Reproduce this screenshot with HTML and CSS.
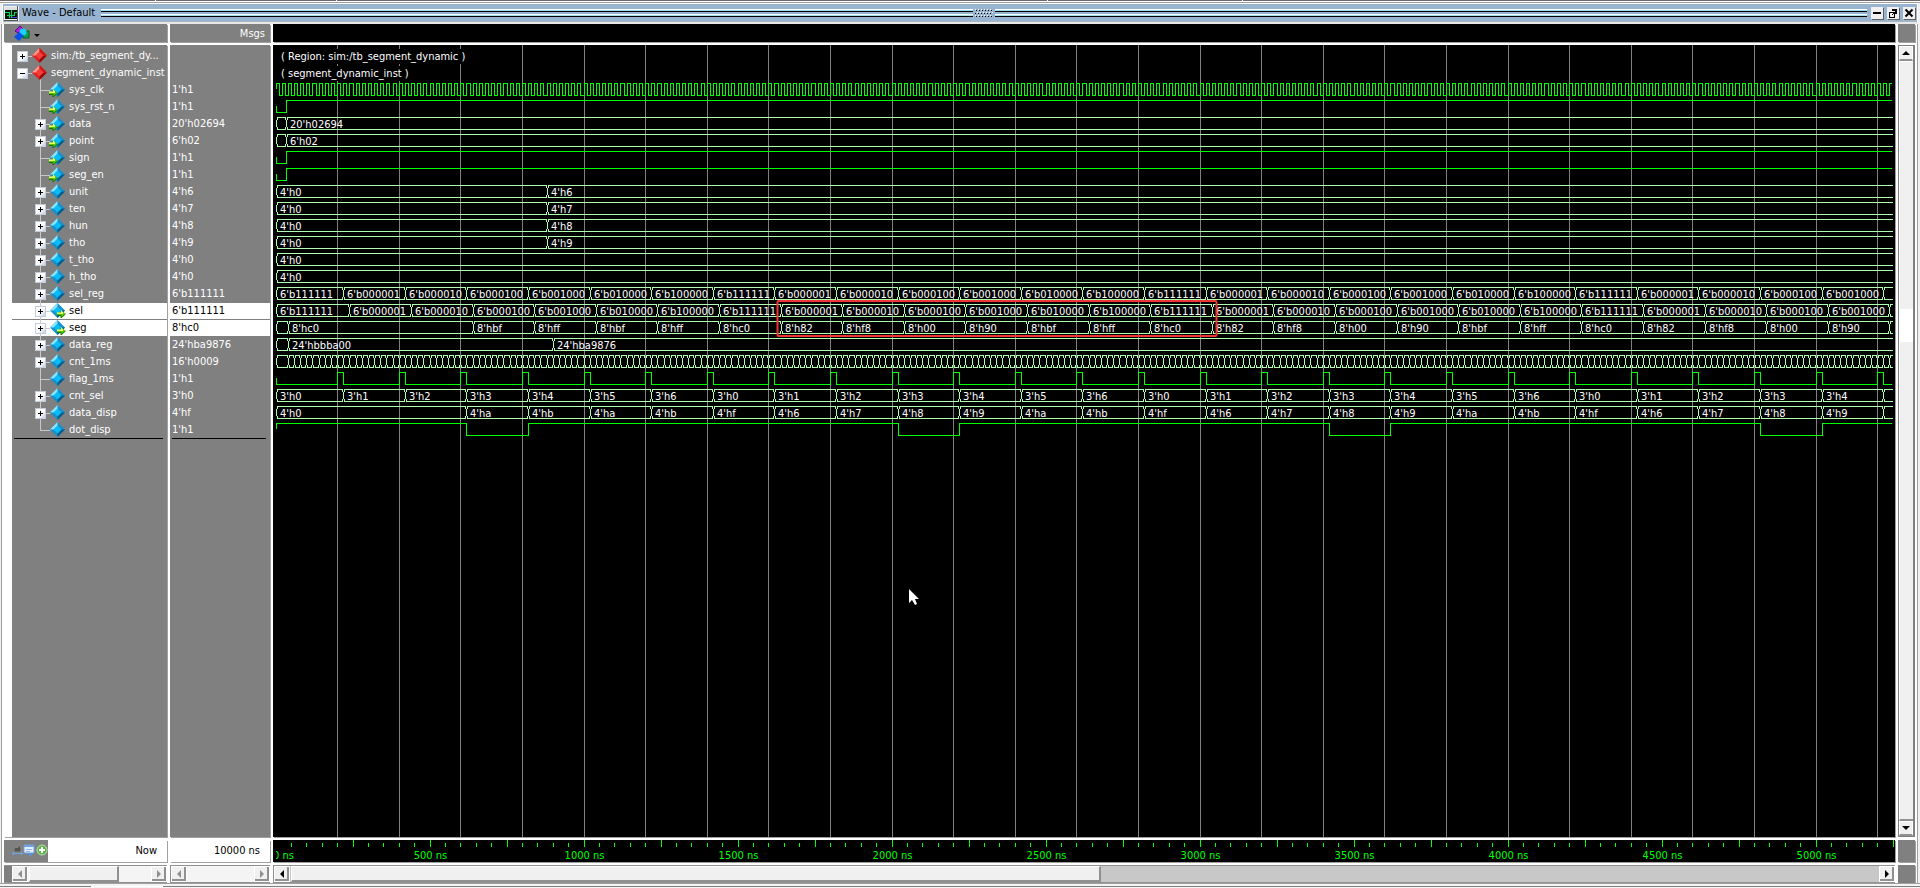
FILE: index.html
```html
<!DOCTYPE html>
<html lang="en">
<head>
<meta charset="utf-8">
<title>Wave - Default</title>
<link rel="stylesheet" href="styles.css">
</head>
<body>
<svg class="defs" width="0" height="0" aria-hidden="true">
  <defs>
    <symbol id="i-region" viewBox="0 0 15 15">
      <path d="M7.500 0 15 7.500 7.500 15 0 7.500Z" fill="#e02020"/>
      <path d="M7.500 0 0 7.500 4 7.500 7.500 4Z" fill="#ff9a90"/>
      <path d="M7.500 15 15 7.500 11 7.500 7.500 11Z" fill="#900c0c"/>
      <path d="M7.500 0 15 7.500 11 7.500 7.500 4Z" fill="#d01818"/>
      <path d="M7.500 3.500 11.500 7.500 7.500 11.500 3.500 7.500Z" fill="#f83c38"/>
    </symbol>
    <symbol id="i-signal" viewBox="0 0 15 15">
      <path d="M7.500 0 15 7.500 7.500 15 0 7.500Z" fill="#1590cc"/>
      <path d="M7.500 0 0 7.500 4 7.500 7.500 4Z" fill="#90e4fc"/>
      <path d="M7.500 15 15 7.500 11 7.500 7.500 11Z" fill="#075c88"/>
      <path d="M7.500 3.500 11.500 7.500 7.500 11.500 3.500 7.500Z" fill="#08bcf8"/>
    </symbol>
    <symbol id="i-arrow" viewBox="0 0 9 8">
      <path d="M0 2.500H4V0L8.500 4 4 8V5.500H0Z" fill="#50c800"/>
      <path d="M0 2.500H4V0L6 2.500V4H0Z" fill="#e8ff70"/>
      <path d="M0 5.500H4V8L8.500 4" fill="none" stroke="#187000" stroke-width="1"/>
    </symbol>
  </defs>
</svg>

<main class="window">
  <div class="edge edge-top"></div>
  <header class="titlebar">
    <svg class="app-icon" width="15" height="15" viewBox="0 0 15 15" shape-rendering="crispEdges" aria-hidden="true">
      <path d="M0 0H15V15H0Z" fill="#f0f0f0"/><path d="M14 0V15H0V14H13V0Z" fill="#555"/>
      <path d="M1 2H13V13H1Z" fill="#001808"/><path d="M1 1H13V4H1Z" fill="#e0e0e0"/>
      <path d="M1 6H5V12M7 4V12M3 9H10V6H13" fill="none" stroke="#10d060"/>
      <path d="M8 11.500H13" stroke="#4a40ff"/>
    </svg>
    <h1>Wave - Default</h1>
    <span class="groove"></span>
    <svg class="grip" width="18" height="9" viewBox="0 0 18 9" shape-rendering="crispEdges" aria-hidden="true">
      <path d="M0 .5H18M2 3.500H18M0 6.500H18" stroke="#fff" stroke-dasharray="1 2"/>
      <path d="M1 1.500H18M0 4.500H18M1 7.500H18" stroke="#000" stroke-dasharray="1 2"/>
    </svg>
    <span class="groove"></span>
    <div class="controls">
      <button type="button" aria-label="Minimize"><svg viewBox="0 0 12 12"><path d="M2 6H10" stroke-width="2"/></svg></button>
      <button type="button" aria-label="Undock"><svg viewBox="0 0 12 12" shape-rendering="crispEdges"><path d="M2.500 5.500H7.500V10.500H2.500Z"/><path d="M5 2H10V7H8V4H5Z" fill="#000" stroke="none"/><path d="M5 8 9 4" stroke-width="1"/></svg></button>
      <button type="button" aria-label="Close"><svg viewBox="0 0 12 12"><path d="M2.500 2.500 9.500 9.500M9.500 2.500 2.500 9.500" stroke-width="2"/></svg></button>
    </div>
  </header>

  <section class="panes">
    <div class="cell head-names">
      <button type="button" class="filter" aria-label="Signal filter">
        <svg width="28" height="18" viewBox="0 0 28 18" aria-hidden="true">
          <path d="M6 2 11 7 6 10 1 7Z" fill="#b020e0" stroke="#50087a"/>
          <path d="M9 7H15V14H9Z" fill="#10a048" stroke="#066028"/>
          <circle cx="9" cy="8" r="3.500" fill="#18d0f8"/>
          <path d="M5 8 10 12 5 17 0 13Z" fill="#0850e8"/>
          <path d="M20 10H26L23 13Z" fill="#000"/>
        </svg>
      </button>
    </div>
    <div class="cell head-msgs">Msgs</div>
    <div class="cell black"></div>
    <div class="cell"></div>

    <div class="cell names"><ul id="names"></ul><hr class="insert"></div>
    <div class="cell values"><ul id="values"></ul><hr></div>
    <div class="cell black" id="wave-pane"><svg id="wave" role="img" aria-label="Waveforms"></svg></div>
    <div class="vbar">
      <button type="button" aria-label="Scroll up"><i class="tri up"></i></button>
      <div class="vthumb"><span></span></div>
      <button type="button" aria-label="Scroll down"><i class="tri down"></i></button>
    </div>

    <div class="cell now">
      <div class="tools">
        <svg width="36" height="14" viewBox="0 0 36 14" aria-hidden="true">
          <path d="M2 8V5L4 2 5 4 7 1 9 4V8Z" fill="#555" stroke="#8a8a8a"/><path d="M0 9.500H11M2 8 0 9.500 2 11M9 8 11 9.500 9 11" fill="none" stroke="#6fa4e0"/>
          <rect x="12" y="1" width="10" height="8" rx="1" fill="#e4effc" stroke="#6fa4e0"/><path d="M12 2H22" stroke="#6fa4e0" stroke-width="2"/><path d="M14 5.500H20M14 7.500H18" stroke="#8db4e4"/><path d="M15 9H21L18 13Z" fill="#5a92d6"/>
          <circle cx="30" cy="6" r="5" fill="#5cb848" stroke="#b8e4ac"/><path d="M30 3V9M27 6H33" stroke="#fff" stroke-width="2"/>
        </svg>
      </div>
      <span>Now</span>
    </div>
    <div class="cell now-value">10000 ns</div>
    <div class="cell black" id="ruler-pane"><svg id="ruler" role="img" aria-label="Time ruler"></svg></div>
    <div class="cell"></div>

    <div class="hbar off inset">
      <button type="button" aria-label="Scroll names left"><i class="tri left"></i></button>
      <div class="track"><span class="thumb names-thumb"></span></div>
      <button type="button" aria-label="Scroll names right"><i class="tri right"></i></button>
    </div>
    <div class="hbar off">
      <button type="button" aria-label="Scroll values left"><i class="tri left"></i></button>
      <div class="track"></div>
      <button type="button" aria-label="Scroll values right"><i class="tri right"></i></button>
    </div>
    <div class="hbar">
      <button type="button" aria-label="Scroll waves left"><i class="tri left"></i></button>
      <div class="track"><span class="thumb wave-thumb"></span></div>
      <button type="button" aria-label="Scroll waves right"><i class="tri right"></i></button>
    </div>
    <div class="cell"></div>
  </section>
  <div class="edge edge-bottom"></div>
</main>
<script src="wave.js"></script>
</body>
</html>
```
FILE: styles.css
```css
* { box-sizing: border-box; }

body {
  margin: 0;
  background: #f0f0f0;
  font: 11px/14px "DejaVu Sans Condensed", "Noto Sans", sans-serif;
  color: #000;
}

ul, h1, hr { margin: 0; padding: 0; border: 0; list-style: none; font: inherit; }
button { padding: 0; border: 0; font: inherit; background: #f0f0f0; }
.defs { position: absolute; }

.window { display: flex; flex-direction: column; height: 100vh; overflow: hidden; }

.edge { flex: none; }
.edge-top {
  height: 3px;
  border-bottom: 1px solid #a0a0a0;
  background:
    linear-gradient(90deg, #706a6e 155px, #fff 155px 156px, #706a6e 156px 336px, #fff 336px 337px, #706a6e 337px 1047px, #fff 1047px 1048px, #706a6e 1048px 1242px, #fff 1242px 1243px, #706a6e 1243px) 0 0 / 100% 1px no-repeat #fff;
}
.edge-bottom {
  height: 5px;
  border-top: 1px solid #a0a0a0;
  background: linear-gradient(90deg, #808080 91px, #fff 91px 163px, #808080 163px) 0 2px / 100% 1px no-repeat #f4f4f4;
}

.titlebar {
  flex: none;
  display: flex;
  align-items: center;
  height: 21px;
  margin: 0 2px;
  padding: 0 2px 0 1px;
  background: #99b4d1;
  border: solid #fff;
  border-width: 1px 1px 2px;
  border-bottom-color: #e8e8e8;
  box-shadow: inset 0 -1px #a8b4c0;
}
.app-icon { flex: none; }
.titlebar h1 { margin: 0 6px 0 3px; white-space: nowrap; }
.groove {
  flex: 1;
  height: 8px;
  background: linear-gradient(#fff 1px, #9fe0ee 1px 2px, #000 2px 3px, transparent 3px 5px, #fff 5px 6px, #9fe0ee 6px 7px, #000 7px);
}
.grip { flex: none; margin: 0 2px; }
.controls { display: flex; gap: 4px; margin-left: 4px; }
.controls button { width: 12px; height: 12px; box-shadow: 1px 1px #606060; }
.controls svg { display: block; fill: none; stroke: #000; }

.panes {
  flex: 1;
  min-height: 0;
  display: grid;
  grid-template-columns: 163px 100px minmax(0, 1fr) 17px;
  grid-template-rows: 18px minmax(0, 1fr) 22px 18px;
  gap: 3px;
  margin: 0 2px 0 1px;
  padding: 0 2px;
  background: #fff;
  border-right: 1px solid #a0a0a0;
  border-left: 1px solid #a0a0a0;
}
.cell { background: #808080; box-shadow: 1px 1px #a0a0a0; overflow: hidden; }
.black { background: #000; }
.black svg { display: block; width: 100%; height: 100%; }

.head-names { padding-left: 10px; }
.filter { display: block; background: none; }
.filter svg { display: block; }
.head-msgs { padding: 3px 5px 0 0; text-align: right; color: #fff; }

.names { border-left: 8px solid #fff; padding-top: 3px; color: #fff; }
.values { padding-top: 3px; color: #fff; }
.row { display: flex; height: 17px; align-items: center; white-space: nowrap; padding-bottom: 2px; }
.row.selected { background: #fff; color: #000; border-bottom: 1px solid #808080; padding-bottom: 1px; }
.values .row { padding-left: 2px; }
.lead { flex: none; position: relative; width: 18px; height: 17px; }
.name-row { padding: 0 0 0 2px; align-items: stretch; }
.name-row.selected { padding-bottom: 0; }
.name-row.child { padding-left: 20px; }
.name-row .label { line-height: 15px; padding-left: 4px; }
.name-row .icon { flex: none; position: relative; width: 15px; height: 15px; z-index: 1; }
.icon svg { display: block; width: 15px; height: 15px; }
.icon .dir { position: absolute; width: 9px; height: 8px; top: 7px; left: -1px; }
.icon .dir.out { left: 7px; }
.name-row .lead::after { content: ""; position: absolute; left: 8px; right: 0; top: 8px; height: 1px; background: #c8c8c8; }
.child .lead::before, .parent .lead::before { content: ""; position: absolute; left: 8px; top: 0; width: 1px; height: 17px; background: #c8c8c8; }
.parent .lead::before { left: 26px; top: 14px; height: 3px; }
.child.last .lead::before { height: 9px; }
.toggle {
  position: absolute; z-index: 1; left: 3px; top: 3px; width: 11px; height: 11px;
  border: 1px solid #c4ccd8; background: linear-gradient(135deg, #fff 50%, #c4d0e8);
}
.toggle::before { content: ""; position: absolute; left: 2px; top: 4px; width: 5px; height: 1px; background: #000; }
.toggle.plus::after { content: ""; position: absolute; left: 4px; top: 2px; width: 1px; height: 5px; background: #000; }
.names hr, .values hr { position: relative; height: 1px; margin: -1px 4px 0 2px; background: #000; }
.names hr::before {
  content: ""; position: absolute; left: 0; top: -3px; width: 4px; height: 7px;
  background: #000; clip-path: polygon(0 0, 100% 50%, 0 100%);
}

.now { display: flex; justify-content: space-between; background: #fff; }
.tools { width: 44px; padding: 4px 0 0 8px; background: #808080; }
.now span { padding: 4px 10px 0 0; }
.now-value { padding: 4px 10px 0 0; text-align: right; background: #fff; }

.vbar { display: flex; flex-direction: column; background: #f0f0f0; border: solid #808080; border-width: 1px 2px 1px 1px; }
.vbar button { flex: none; height: 15px; border: 1px solid #fff; border-bottom: 2px solid #909090; }
.vthumb { flex: 1; border-top: 1px solid #fff; border-bottom: 2px solid #909090; border-left: 1px solid #fff; padding-top: 247px; }
.vthumb span { display: block; height: 33px; background: #fff; }

.hbar { display: flex; background: #c8c8c8; border: solid #909090; border-width: 1px 0 1px 1px; }
.hbar button { flex: none; width: 16px; border: solid #fff; border-width: 1px; box-shadow: inset -2px -2px #909090; }
.track { flex: 1; display: flex; padding-left: 1px; }
.thumb { background: #f0f0f0; border: 1px solid #fff; border-right: 2px solid #909090; border-bottom: 2px solid #909090; }
.names-thumb { width: 74%; }
.wave-thumb { width: 51%; }
.inset { box-shadow: inset 8px 0 #808080; padding-left: 8px; border-left: 0; }
.off { background: #f4f4f4; }

.tri { display: block; width: 8px; height: 8px; margin: auto; background: #000; }
.up { clip-path: polygon(0 75%, 50% 25%, 100% 75%); }
.down { clip-path: polygon(0 25%, 50% 75%, 100% 25%); }
.left { clip-path: polygon(75% 0, 25% 50%, 75% 100%); }
.right { clip-path: polygon(25% 0, 75% 50%, 25% 100%); }
.off .tri { background: #909090; }

.grid { stroke: #808080; }
.bit { stroke: #00ff00; fill: none; }
.bus { stroke: #b0ffb0; fill: none; }
.grid, .bit, .bus, .ticks { shape-rendering: crispEdges; }
.wave-text { fill: #fff; }
.time-text { fill: #00ff00; }
.ticks { stroke: #00ff00; }
.marker { fill: none; stroke: #f03434; stroke-width: 2; }
.pointer { fill: #fff; }
.label-back { fill: #000; }
```
FILE: wave.js
```javascript
const SCALE = 0.308;   // pixels per ns
const ORIGIN = 3;      // x of 0 ns inside the pane
const ROW = 17;
const TOP = 3;

// Repeats a list of values every 200 ns from a start time.
function steps(first, start, list, offset = 0) {
  const out = first.slice();
  for (let t = start, i = offset; t < 5400; t += 200, i++) out.push([t, list[i % list.length]]);
  return out;
}
const selCodes = ["6'b000001", "6'b000010", "6'b000100", "6'b001000", "6'b010000", "6'b100000", "6'b111111"];
const clock = [], counter = [[0, ""]], flag = [[0, 0]];
for (let t = 0; t < 5400; t += 20) { clock.push([t, 1], [t + 10, 0]); if (t >= 40) counter.push([t, ""]); }
for (let t = 200; t < 5400; t += 200) flag.push([t, 1], [t + 20, 0]);

const digitSteps = v => [[0, "4'h0"], [880, v]];
const signals = [
  { name: "sim:/tb_segment_dy...", region: "( Region: sim:/tb_segment_dynamic )", toggle: "plus" },
  { name: "segment_dynamic_inst", region: "( segment_dynamic_inst )", toggle: "minus", parent: true },
  { name: "sys_clk", value: "1'h1", dir: "in", bit: clock },
  { name: "sys_rst_n", value: "1'h1", dir: "in", bit: [[0, 0], [35, 1]] },
  { name: "data", value: "20'h02694", dir: "in", bus: [[0, ""], [35, "20'h02694"]] },
  { name: "point", value: "6'h02", dir: "in", bus: [[0, ""], [35, "6'h02"]] },
  { name: "sign", value: "1'h1", dir: "in", bit: [[0, 0], [35, 1]] },
  { name: "seg_en", value: "1'h1", dir: "in", bit: [[0, 0], [35, 1]] },
  { name: "unit", value: "4'h6", bus: digitSteps("4'h6") },
  { name: "ten", value: "4'h7", bus: digitSteps("4'h7") },
  { name: "hun", value: "4'h8", bus: digitSteps("4'h8") },
  { name: "tho", value: "4'h9", bus: digitSteps("4'h9") },
  { name: "t_tho", value: "4'h0", bus: [[0, "4'h0"]] },
  { name: "h_tho", value: "4'h0", bus: [[0, "4'h0"]] },
  { name: "sel_reg", value: "6'b111111", bus: steps([[0, "6'b111111"]], 220, selCodes) },
  { name: "sel", value: "6'b111111", dir: "out", selected: true, bus: steps([[0, "6'b111111"]], 240, selCodes) },
  { name: "seg", value: "8'hc0", dir: "out", selected: true,
    bus: steps([[0, ""], [40, "8'hc0"], [640, "8'hbf"], [840, "8'hff"]], 1040,
      ["8'h82", "8'hf8", "8'h00", "8'h90", "8'hbf", "8'hff", "8'hc0"], 4) },
  { name: "data_reg", value: "24'hba9876", bus: [[0, ""], [40, "24'hbbba00"], [900, "24'hba9876"]] },
  { name: "cnt_1ms", value: "16'h0009", bus: counter },
  { name: "flag_1ms", value: "1'h1", bit: flag },
  { name: "cnt_sel", value: "3'h0",
    bus: steps([[0, "3'h0"]], 220, ["3'h1", "3'h2", "3'h3", "3'h4", "3'h5", "3'h6", "3'h0"]) },
  { name: "data_disp", value: "4'hf",
    bus: steps([[0, "4'h0"], [620, "4'ha"], [820, "4'hb"]], 1020,
      ["4'h6", "4'h7", "4'h8", "4'h9", "4'ha", "4'hb", "4'hf"], 4) },
  { name: "dot_disp", value: "1'h1",
    bit: [[0, 1], [620, 0], [820, 1], [2020, 0], [2220, 1], [3420, 0], [3620, 1], [4820, 0], [5020, 1]] }
];

const px = t => Math.floor(ORIGIN + t * SCALE) + 0.5;
const text = (x, y, s, cls, extra = "") => `<text class="${cls}" x="${x}" y="${y}" ${extra}>${s}</text>`;

function bitPath(points, top, end) {
  const level = v => top + (v ? 1.5 : 13.5);
  const first = level(points[0][1]);
  let d = `M${px(0)} ${top + 7}V${first}`;
  for (const [t, v] of points.slice(1)) {
    if (px(t) > end) break;
    d += `H${px(t)}V${level(v)}`;
  }
  return `<path class="bit" d="${d}H${end}"/>`;
}

function busPath(points, top, end) {
  const a = top + 1, b = top + 14;
  let d = `M${px(0)} ${a + 3}V${b - 3}`;
  let labels = "";
  points.forEach(([t, label], i) => {
    const x = px(t);
    if (x > end) return;
    const next = points[i + 1] ? Math.min(px(points[i + 1][0]), end + 1) : end + 1;
    const closed = points[i + 1] && px(points[i + 1][0]) <= end;
    d += `M${x} ${a + 3}V${b - 3}M${x + 1} ${a + 3}V${a + 0.5}H${next - 0.5}M${x + 1} ${b - 3}V${b - 0.5}H${next - 0.5}`;
    if (closed) d += `M${next - 1} ${a}V${a + 3}M${next - 1} ${b}V${b - 3}`;
    if (label && x < end - 20) labels += text(x + 3.5, top + 12, label, "wave-text");
  });
  return `<path class="bus" d="${d}"/>${labels}`;
}

function drawLists() {
  document.getElementById("names").innerHTML = signals.map((s, i) => {
    const cls = ["row", "name-row", s.region ? "" : "child", s.parent ? "parent" : "",
      s.selected ? "selected" : "", i === signals.length - 1 ? "last" : ""].join(" ");
    const mode = s.toggle || (s.bus ? "plus" : "");
    const toggle = mode ? `<button type="button" class="toggle ${mode}" aria-label="Toggle ${s.name}"></button>` : "";
    const dir = s.dir ? `<svg class="dir ${s.dir}"><use href="#i-arrow"/></svg>` : "";
    const icon = `<span class="icon"><svg><use href="#${s.region ? "i-region" : "i-signal"}"/></svg>${dir}</span>`;
    return `<li class="${cls}"><span class="lead">${toggle}</span>${icon}<span class="label">${s.name}</span></li>`;
  }).join("");
  document.getElementById("values").innerHTML = signals.map(s =>
    `<li class="row ${s.selected ? "selected" : ""}">${s.value || ""}</li>`).join("");
}

function drawWaves() {
  const pane = document.getElementById("wave-pane");
  const width = pane.clientWidth, height = pane.clientHeight, end = width - 3;
  let grid = "", out = "";
  for (let t = 200; px(t) < width; t += 200) grid += `M${px(t)} 0V${height}`;
  out += `<path class="grid" d="${grid}"/>`;
  signals.forEach((s, i) => {
    const top = TOP + i * ROW;
    if (s.region) out += `<rect class="label-back" x="6" y="${top + 1}" width="${i ? 125 : 182}" height="15"/>` + text(8, top + 12, s.region, "wave-text");
    if (s.bit) out += bitPath(s.bit, top, end);
    if (s.bus) out += busPath(s.bus, top, end);
  });
  const x1 = px(1630) - 1, x2 = px(3052);
  out += `<rect class="marker" x="${x1}" y="256" width="${x2 - x1}" height="35" rx="1"/>`;
  out += `<path class="pointer" d="M636 544V558L639 555 642 560 644 559 642 554H646Z"/>`;
  document.getElementById("wave").innerHTML = out;
}

function drawRuler() {
  const width = document.getElementById("ruler-pane").clientWidth;
  let d = "", labels = "";
  for (let t = 50; px(t) < width; t += 50) {
    d += `M${px(t)} ${t % 250 ? 3 : 0}V7`;
    if (t % 500 === 0) labels += text(px(t), 19, t + " ns", "time-text", 'text-anchor="middle"');
  }
  document.getElementById("ruler").innerHTML =
    `<clipPath id="ruler-clip"><rect x="3" y="0" width="${width}" height="22"/></clipPath>` +
    `<path class="ticks" d="${d}"/><g clip-path="url(#ruler-clip)">${text(0, 19, "0 ns", "time-text")}${labels}</g>`;
}

function draw() { drawWaves(); drawRuler(); }
drawLists();
draw();
window.addEventListener("resize", draw);
```
